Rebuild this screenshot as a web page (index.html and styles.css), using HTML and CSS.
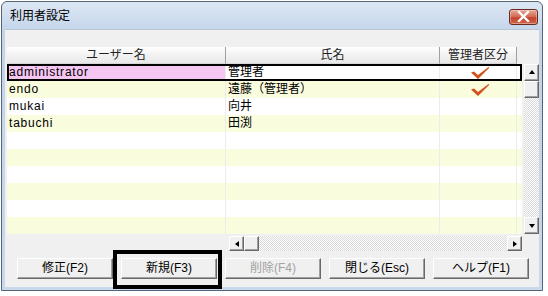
FILE: index.html
```html
<!DOCTYPE html>
<html lang="ja">
<head>
    <meta charset="UTF-8">
    <title>利用者設定</title>
    <link rel="stylesheet" href="styles.css">
</head>
<body>
    <div class="window">
        <div class="titlebar">
            <span class="title">利用者設定</span>
            <div class="close-btn">
                <svg width="13" height="11" viewBox="0 0 13 11"><path d="M2 1 L11 10 M11 1 L2 10" stroke="#fff" stroke-width="2.4" stroke-linecap="square"/></svg>
            </div>
        </div>

        <div class="content">
            <div class="grid-wrap">
                <div class="grid">
                    <div class="grid-header">
                        <div class="hcell c1">ユーザー名</div>
                        <div class="hcell c2">氏名</div>
                        <div class="hcell c3">管理者区分</div>
                    </div>

                    <div class="row selected">
                        <div class="cell c1 pink">administrator</div>
                        <div class="cell c2">管理者</div>
                        <div class="cell c3"><svg class="check" width="20" height="14" viewBox="0 0 20 14"><path d="M1 6.5 L4 5.5 L8 9 L18.5 1 L19.3 1.8 L8 13 Z" fill="#d4501e"/></svg></div>
                        <div class="cell filler"></div>
                    </div>
                    <div class="row alt">
                        <div class="cell c1">endo</div>
                        <div class="cell c2">遠藤（管理者）</div>
                        <div class="cell c3"><svg class="check" width="20" height="14" viewBox="0 0 20 14"><path d="M1 6.5 L4 5.5 L8 9 L18.5 1 L19.3 1.8 L8 13 Z" fill="#d4501e"/></svg></div>
                        <div class="cell filler"></div>
                    </div>
                    <div class="row">
                        <div class="cell c1">mukai</div>
                        <div class="cell c2">向井</div>
                        <div class="cell c3"></div>
                        <div class="cell filler"></div>
                    </div>
                    <div class="row alt">
                        <div class="cell c1">tabuchi</div>
                        <div class="cell c2">田渕</div>
                        <div class="cell c3"></div>
                        <div class="cell filler"></div>
                    </div>
                    <div class="row"><div class="cell c1"></div><div class="cell c2"></div><div class="cell c3"></div><div class="cell filler"></div></div>
                    <div class="row alt"><div class="cell c1"></div><div class="cell c2"></div><div class="cell c3"></div><div class="cell filler"></div></div>
                    <div class="row"><div class="cell c1"></div><div class="cell c2"></div><div class="cell c3"></div><div class="cell filler"></div></div>
                    <div class="row alt"><div class="cell c1"></div><div class="cell c2"></div><div class="cell c3"></div><div class="cell filler"></div></div>
                    <div class="row"><div class="cell c1"></div><div class="cell c2"></div><div class="cell c3"></div><div class="cell filler"></div></div>
                    <div class="row alt"><div class="cell c1"></div><div class="cell c2"></div><div class="cell c3"></div><div class="cell filler"></div></div>
                </div>

                <div class="vscroll">
                    <div class="sb-btn tall"><span class="arrow up"></span></div>
                    <div class="sb-thumb tall"></div>
                    <div class="sb-track"></div>
                    <div class="sb-btn tall"><span class="arrow down"></span></div>
                </div>
            </div>

            <div class="hscroll">
                <div class="sb-btn"><span class="arrow left"></span></div>
                <div class="sb-thumb"></div>
                <div class="sb-track"></div>
                <div class="sb-btn"><span class="arrow right"></span></div>
            </div>

            <div class="buttons">
                <div class="btn">修正(F2)</div>
                <div class="btn">新規(F3)</div>
                <div class="btn disabled">削除(F4)</div>
                <div class="btn">閉じる(Esc)</div>
                <div class="btn">ヘルプ(F1)</div>
            </div>
        </div>
    </div>

    <div class="highlight"></div>
</body>
</html>
```

FILE: styles.css
```css
* {
    box-sizing: border-box;
}

body {
    position: relative;
    margin: 0;
    width: 548px;
    height: 296px;
    overflow: hidden;
    background-color: #ffffff;
    font-family: "Liberation Sans", "Noto Sans CJK JP", sans-serif;
    font-size: 12px;
    color: #000000;
}

.window {
    display: flex;
    flex-direction: column;
    margin: 1px 0 0 1px;
    width: 542px;
    height: 290px;
    border: 1px solid #566578;
    border-radius: 6px 6px 0 0;
    background: linear-gradient(#dce7f4, #c3d4ea 30px, #c8d8ed);
    padding: 0 3px 3px 3px;
}

.titlebar {
    display: flex;
    align-items: center;
    justify-content: space-between;
    height: 27px;
    padding: 0 1px 0 5px;
}

.title {
    font-size: 12px;
    line-height: 1;
    padding-top: 1px;
}

.close-btn {
    display: flex;
    align-items: center;
    justify-content: center;
    width: 29px;
    height: 16px;
    margin-top: 2px;
    border: 1px solid #6b2a20;
    border-radius: 3px;
    background: linear-gradient(#e8a796, #d2684f 50%, #c2442c 55%, #d0644a);
    box-shadow: inset 0 0 0 1px rgba(255, 255, 255, 0.35);
}

.content {
    flex: 1;
    display: flex;
    flex-direction: column;
    background-color: #f0f0f0;
    border-top: 1px solid #b9c6d6;
    padding: 17px 0 0 2px;
}

.grid-wrap {
    display: flex;
}

.grid {
    width: 515px;
}

.grid-header {
    display: flex;
    height: 17px;
}

.hcell {
    height: 17px;
    line-height: 16px;
    text-align: center;
    background: linear-gradient(#ffffff, #f2f2f2 50%, #e8e8e8);
    border-right: 1px solid #a0a0a0;
    border-bottom: 1px solid #d6d6d6;
    color: #222222;
}

.c1 {
    width: 219px;
}

.c2 {
    width: 214px;
}

.c3 {
    width: 77px;
}

.filler {
    flex: 1;
}

.row {
    position: relative;
    display: flex;
    height: 17px;
    background-color: #ffffff;
}

.row.alt {
    background-color: #f9fcdd;
}

.cell {
    height: 17px;
    line-height: 17px;
    padding-left: 2px;
    border-right: 1px solid #ececec;
    white-space: nowrap;
    overflow: hidden;
}

.cell.c1 {
    letter-spacing: 0.8px;
}

.cell.c3 {
    display: flex;
    align-items: center;
    justify-content: center;
    padding-left: 0;
}

.cell.filler {
    border-right: none;
}

.cell.pink {
    background-color: #f6c6f3;
}

.row.selected::after {
    content: "";
    position: absolute;
    top: 0;
    left: 0;
    right: 0;
    bottom: 0;
    border: 2px solid #000000;
}

.check {
    margin-left: 4px;
}

/* scroll bars */
.vscroll {
    display: flex;
    flex-direction: column;
    width: 15px;
    margin: 17px 0 0 2px;
}

.sb-btn,
.sb-thumb {
    display: flex;
    align-items: center;
    justify-content: center;
    width: 15px;
    height: 15px;
    background-color: #f0f0f0;
    border: 1px solid;
    border-color: #ffffff #696969 #696969 #ffffff;
    box-shadow: inset -1px -1px 0 #a0a0a0;
}

.sb-btn.tall,
.sb-thumb.tall {
    height: 17px;
}

.sb-track {
    flex: 1;
    background: repeating-conic-gradient(#d8d8d8 0 25%, #ffffff 0 50%) 0 0 / 2px 2px;
}

.arrow {
    width: 0;
    height: 0;
    border: 3px solid transparent;
}

.arrow.up {
    border-bottom: 4px solid #000;
    border-top: none;
    margin-top: -1px;
}

.arrow.down {
    border-top: 4px solid #000;
    border-bottom: none;
}

.arrow.left {
    border-right: 4px solid #000;
    border-left: none;
}

.arrow.right {
    border-left: 4px solid #000;
    border-right: none;
}

.hscroll {
    display: flex;
    width: 293px;
    height: 15px;
    margin: 2px 0 0 222px;
}

.buttons {
    display: flex;
    gap: 8px;
    margin: 7px 0 0 10px;
}

.btn {
    width: 96px;
    height: 21px;
    line-height: 19px;
    text-align: center;
    background-color: #f0f0f0;
    border: 1px solid;
    border-color: #ffffff #696969 #696969 #ffffff;
    box-shadow: inset -1px -1px 0 #a0a0a0;
}

.btn.disabled {
    color: #a3a3a3;
}

.highlight {
    position: absolute;
    left: 113px;
    top: 250px;
    width: 109px;
    height: 39px;
    border: 4px solid #000000;
}
```
